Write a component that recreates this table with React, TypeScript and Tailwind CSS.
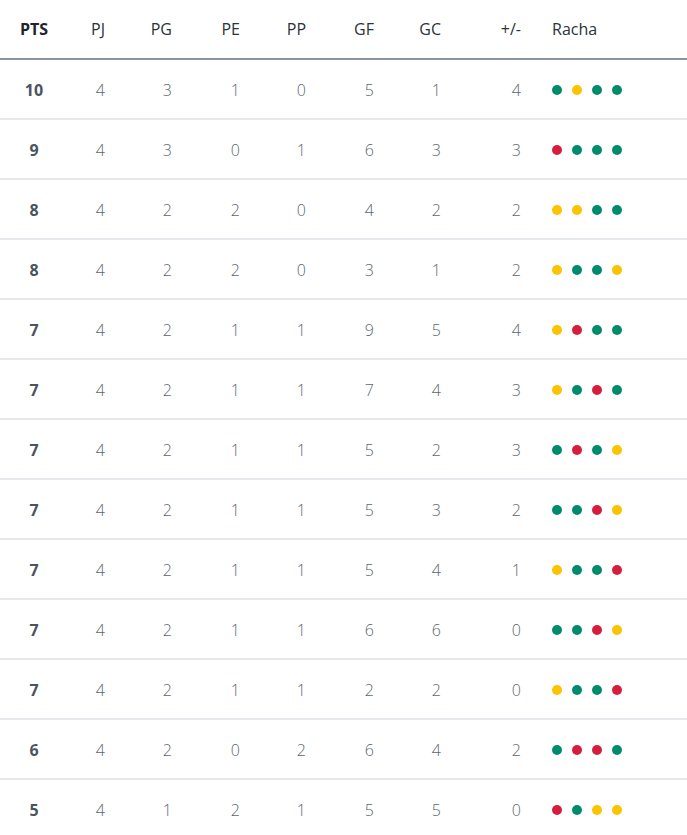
import React from 'react';

type Res = 'W' | 'D' | 'L';

const rows: [number, number, number, number, number, number, number, number, string][] = [
  [10, 4, 3, 1, 0, 5, 1, 4, 'WDWW'],
  [9, 4, 3, 0, 1, 6, 3, 3, 'LWWW'],
  [8, 4, 2, 2, 0, 4, 2, 2, 'DDWW'],
  [8, 4, 2, 2, 0, 3, 1, 2, 'DWWD'],
  [7, 4, 2, 1, 1, 9, 5, 4, 'DLWW'],
  [7, 4, 2, 1, 1, 7, 4, 3, 'DWLW'],
  [7, 4, 2, 1, 1, 5, 2, 3, 'WLWD'],
  [7, 4, 2, 1, 1, 5, 3, 2, 'WWLD'],
  [7, 4, 2, 1, 1, 5, 4, 1, 'DWWL'],
  [7, 4, 2, 1, 1, 6, 6, 0, 'WWLD'],
  [7, 4, 2, 1, 1, 2, 2, 0, 'DWWL'],
  [6, 4, 2, 0, 2, 6, 4, 2, 'WLLW'],
  [5, 4, 1, 2, 1, 5, 5, 0, 'LWDD'],
];

const dotColor: Record<Res, string> = {
  W: 'bg-[#008c6c]',
  D: 'bg-[#fbc300]',
  L: 'bg-[#d51e3d]',
};

const grid = 'grid grid-cols-[68px_37px_67px_68px_66px_68px_67px_80px_1fr] items-center';

export default function App() {
  return (
    <div className="w-[687px] bg-white font-['Open_Sans',sans-serif]">
      <div className={`${grid} h-[60px] border-b-2 border-[#8b959d] text-[16px] text-[#2b3238]`}>
        <div className="text-center font-bold text-[#1f2429]">PTS</div>
        <div className="text-right">PJ</div>
        <div className="text-right">PG</div>
        <div className="text-right">PE</div>
        <div className="text-right">PP</div>
        <div className="text-right">GF</div>
        <div className="text-right">GC</div>
        <div className="text-right">+/-</div>
        <div className="pl-[31px]">Racha</div>
      </div>
      {rows.map((r, i) => (
        <div
          key={i}
          className={`${grid} h-[60px] border-b-2 border-[#e6e9ec] pt-[2px] text-[16px] font-light text-[#5d6770]`}
        >
          <div className="text-center font-bold text-[#4a545e]">{r[0]}</div>
          {r.slice(1, 8).map((v, j) => (
            <div key={j} className="text-right">
              {v}
            </div>
          ))}
          <div className="flex gap-[10px] pl-[31px]">
            {r[8].split('').map((c, k) => (
              <span key={k} className={`h-[10px] w-[10px] rounded-full ${dotColor[c as Res]}`} />
            ))}
          </div>
        </div>
      ))}
    </div>
  );
}
